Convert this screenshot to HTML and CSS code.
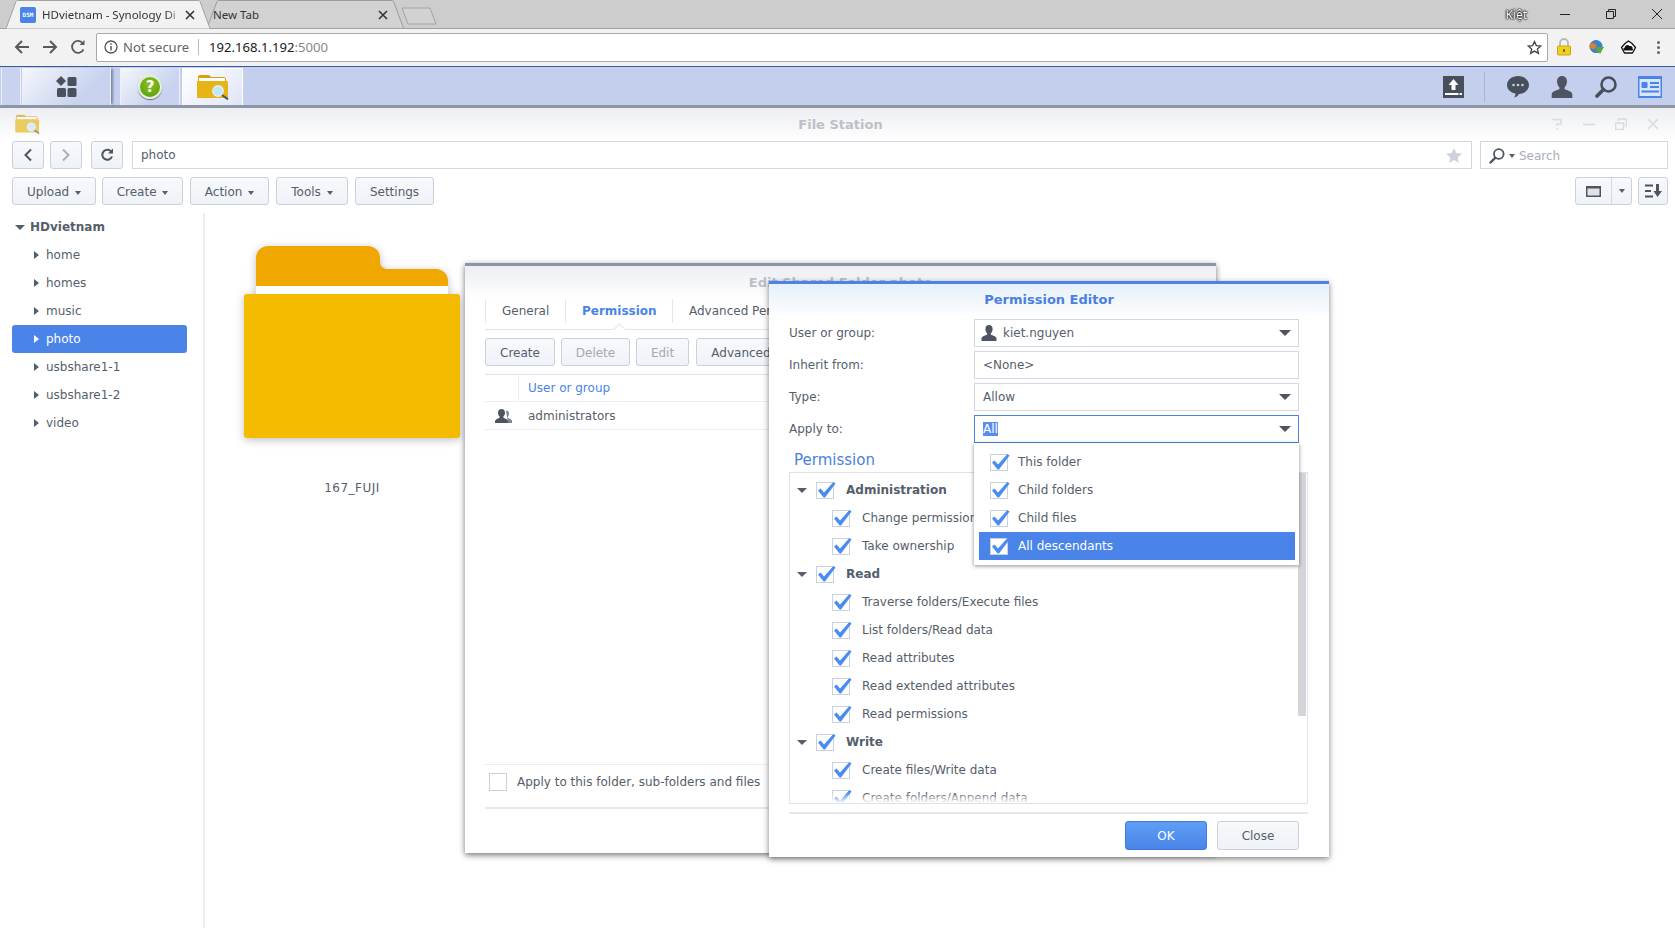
FILE: index.html
```html
<!DOCTYPE html>
<html lang="en">
<head>
  <meta charset="UTF-8" />
  <meta name="viewport" content="width=device-width, initial-scale=1.0" />
  <title>HDvietnam - Synology DiskStation</title>
  <link rel="stylesheet" href="styles.css">
</head>
<body>
  <!-- shared icons -->
  <svg class="defs" width="0" height="0">
    <symbol id="check" viewBox="0 0 20 18">
      <rect x="0.500" y="1.500" width="17" height="16" fill="#fff" stroke="#c9d1de" />
      <path d="M2 9.500 4.600 7.600 8 11.400 17.400 1 19.600 2.600 9 16.400H7.600z" fill="#4a8cf0" />
    </symbol>
    <symbol id="user" viewBox="0 0 16 16">
      <path d="M8 0c2.300 0 3.600 1.700 3.600 3.900 0 1.700-.7 3.300-1.600 4.300-.3.400-.3 1.200.2 1.500 1.500.8 4.800 1.500 5.300 3.500V16H.5v-2.800c.5-2 3.800-2.700 5.300-3.500.5-.3.500-1.100.2-1.500C5.100 7.200 4.400 5.600 4.400 3.900 4.400 1.700 5.700 0 8 0z" fill="#4d5561" />
    </symbol>
    <symbol id="finder" viewBox="0 0 32 26">
      <path d="M1 3c0-1 .7-2 2-2h9l2 2h13c1.200 0 2 .8 2 2v3H1z" fill="#d99f10" />
      <rect x="2" y="4" width="26" height="3" fill="#fff" />
      <path d="M0 7h30c.6 0 1 .4 1 1v15c0 .6-.4 1-1 1H1c-.6 0-1-.4-1-1z" fill="#e6b414" />
      <circle cx="21" cy="17" r="5.200" fill="#bfe6fb" stroke="#e8eef2" stroke-width="1.400" />
      <path d="M25 21 31 25.400" stroke="#4d5561" stroke-width="2" />
    </symbol>
  </svg>

  <!-- browser chrome -->
  <div class="tabstrip">
    <div class="tab tab-active">
      <svg class="tab-shape" width="205" height="29"><path d="M0 28.500 10 1.500C10.300.800 10.800.500 11.500.500H192.500C193.200.500 193.700.800 194 1.500L204 28.500" fill="#f2f2f2" stroke="#a2a2a2" /></svg>
      <span class="favicon">DSM</span>
      <span class="tab-title">HDvietnam - Synology Di</span>
      <svg class="tab-close" width="10" height="10"><path d="M1 1 9 9M9 1 1 9" stroke="#333" stroke-width="1.600" /></svg>
    </div>
    <div class="tab tab-other">
      <svg class="tab-shape" width="197" height="29"><path d="M0 28 10 1.500C10.300.800 10.800.500 11.500.500H185C185.700.500 186.200.800 186.500 1.500L196.500 28" fill="#d2d2d2" stroke="#9c9c9c" /></svg>
      <span class="tab-title">New Tab</span>
      <svg class="tab-close" width="10" height="10"><path d="M1 1 9 9M9 1 1 9" stroke="#333" stroke-width="1.600" /></svg>
    </div>
    <svg class="tab-new" width="36" height="18"><path d="M1 1H29L35 17H7z" fill="#d2d2d2" stroke="#a4a4a4" stroke-linejoin="round" /></svg>
    <span class="chrome-user">Kiệt</span>
    <div class="win-buttons">
      <svg width="12" height="12"><path d="M1 6.500H11" stroke="#222" /></svg>
      <svg width="12" height="12"><path d="M1.500 3.500H8.500V10.500H1.500zM3.500 3.500V1.500H10.500V8.500H8.500" fill="none" stroke="#222" /></svg>
      <svg width="12" height="12"><path d="M1 1 11 11M11 1 1 11" stroke="#222" /></svg>
    </div>
  </div>

  <div class="addressbar">
    <svg class="nav-icon" width="16" height="16" viewBox="0 0 16 16"><path d="M15 8H2M8 2 2 8l6 6" fill="none" stroke="#5a5a5a" stroke-width="2" /></svg>
    <svg class="nav-icon" width="16" height="16" viewBox="0 0 16 16"><path d="M1 8H14M8 2l6 6-6 6" fill="none" stroke="#5a5a5a" stroke-width="2" /></svg>
    <svg class="nav-icon" width="16" height="16" viewBox="0 0 16 16"><path d="M13.500 10.500A6 6 0 1 1 13 4.500" fill="none" stroke="#5a5a5a" stroke-width="1.800" /><path d="M14.500 1v5h-5z" fill="#5a5a5a" /></svg>
    <div class="omnibox">
      <svg width="14" height="14" viewBox="0 0 14 14"><circle cx="7" cy="7" r="6" fill="none" stroke="#555" stroke-width="1.300" /><path d="M7 6v4.500M7 3.200v1.500" stroke="#555" stroke-width="1.500" /></svg>
      <span class="not-secure">Not secure</span>
      <span class="omni-sep"></span>
      <span class="url">192.168.1.192<span class="url-port">:5000</span></span>
      <svg class="omni-star" width="15" height="15" viewBox="0 0 15 15"><path d="M7.500 1.500 9.300 5.600 13.800 6 10.400 9 11.400 13.400 7.500 11.100 3.600 13.400 4.600 9 1.200 6 5.700 5.600z" fill="none" stroke="#444" stroke-width="1.300" /></svg>
    </div>
    <div class="ext-icon">
      <svg width="16" height="18" viewBox="0 0 16 18"><path d="M4 9V5a4 4 0 0 1 8 0v4" fill="none" stroke="#b9b9b9" stroke-width="1.800" /><rect x="1.500" y="8" width="13" height="9" rx="1" fill="#f0d020" stroke="#c8a810" /><rect x="7" y="11" width="2" height="3" fill="#8a7208" /></svg>
    </div>
    <div class="ext-icon">
      <svg width="17" height="16" viewBox="0 0 17 16"><path d="M8 1a6.500 6.500 0 1 0 .1 0z" fill="#3f7fcf" /><path d="M2 5c2-2 5-1 6 1s-1 5-4 4-3-3-2-5z" fill="#d9822b" /><path d="M9 8h7l-4 7-2-3-3 1z" fill="#58a83a" /></svg>
    </div>
    <div class="ext-icon">
      <svg width="17" height="15" viewBox="0 0 17 15"><path d="M8.500 1 12 3.500 15.500 7.500 12.500 13H4.500L1.500 7.500 5 3.500z" fill="#fff" stroke="#111" stroke-width="1.300" stroke-linejoin="round" /><path d="M4.500 10.500c-1.600 0-1.600-2.500 0-2.700C5 5 8 4 9.500 6c2-.5 3.500 1 3 2.500 1 .5.500 2-.5 2z" fill="#111" /></svg>
    </div>
    <div class="ext-menu"><i></i><i></i><i></i></div>
  </div>

  <!-- DSM taskbar -->
  <div class="taskbar">
    <div class="task-btn task-stub"></div>
    <div class="task-btn task-main">
      <svg width="21" height="21" viewBox="0 0 21 21"><path d="M5 0 10 5 5 10 0 5z" fill="#4a515c" /><rect x="11.500" y="1" width="9" height="9" rx="1.500" fill="#4a515c" /><rect x="1" y="12" width="9" height="9" rx="1.500" fill="#4a515c" /><rect x="11.500" y="12" width="9" height="9" rx="1.500" fill="#4a515c" /></svg>
    </div>
    <div class="task-btn task-help">
      <span class="help-icon">?</span>
    </div>
    <div class="task-btn task-open">
      <svg width="32" height="26"><use href="#finder" /></svg>
    </div>
    <div class="task-right">
      <svg class="task-upload" width="21" height="22" viewBox="0 0 21 22"><rect width="21" height="22" fill="#474f5b" /><path d="M10.500 3 15.500 9H12.500V14H8.500V9H5.500z" fill="#fff" /><rect x="2" y="17" width="17" height="2" fill="#fff" /><rect x="15" y="17.500" width="2" height="1" fill="#474f5b" /></svg>
      <span class="task-sep"></span>
      <svg width="22" height="22" viewBox="0 0 22 22"><path d="M11 0c6 0 11 3.900 11 9s-5 9-10 9c-1 1.500-2.500 3-5 3.500 1-1 1.500-2.500 1.400-4C3.500 16.500 0 13.500 0 9 0 3.900 5 0 11 0z" fill="#474f5b" /><circle cx="6.500" cy="9" r="1.300" fill="#c3cfec" /><circle cx="11" cy="9" r="1.300" fill="#c3cfec" /><circle cx="15.500" cy="9" r="1.300" fill="#c3cfec" /></svg>
      <svg width="22" height="22"><use href="#user" /></svg>
      <svg width="22" height="22" viewBox="0 0 22 22"><circle cx="13.500" cy="8.500" r="7" fill="none" stroke="#474f5b" stroke-width="2.600" /><path d="M8.500 13.500 2 20" stroke="#474f5b" stroke-width="3.600" stroke-linecap="round" /></svg>
      <svg class="task-card" width="24" height="22" viewBox="0 0 24 22"><rect width="24" height="22" fill="#4a84e8" /><rect x="1.500" y="3" width="21" height="17" fill="#d9e5fa" /><rect x="3.500" y="6" width="6" height="6" rx="1" fill="#4a84e8" /><path d="M12 7H21M12 11H21M3.500 15.500H21" stroke="#4a84e8" stroke-width="1.800" /></svg>
    </div>
  </div>

  <!-- File Station window -->
  <div class="window">
    <div class="window-head">
      <svg class="window-icon" width="25" height="20"><use href="#finder" /></svg>
      <span class="window-title">File Station</span>
      <div class="window-tools">
        <svg width="12" height="12" viewBox="0 0 12 12"><path d="M1.500 1.500H10V6H6V8M6 10V11.500" fill="none" stroke="#d9dbe0" stroke-width="1.600" /></svg>
        <svg width="12" height="12" viewBox="0 0 12 12"><path d="M0 6.500H12" stroke="#d9dbe0" stroke-width="1.600" /></svg>
        <svg width="12" height="12" viewBox="0 0 12 12"><path d="M.500 5H8.500V11.500H.500zM3.500 3V1H11.500V7.500H9.500" fill="none" stroke="#d9dbe0" stroke-width="1.300" /></svg>
        <svg width="12" height="12" viewBox="0 0 12 12"><path d="M1 1 11 11M11 1 1 11" stroke="#d9dbe0" stroke-width="1.600" /></svg>
      </div>
    </div>

    <div class="nav-row">
      <button class="btn btn-square"><svg width="10" height="14" viewBox="0 0 10 14"><path d="M8 1.500 2.500 7 8 12.500" fill="none" stroke="#4d5561" stroke-width="2" /></svg></button>
      <button class="btn btn-square btn-next"><svg width="10" height="14" viewBox="0 0 10 14"><path d="M2 1.500 7.500 7 2 12.500" fill="none" stroke="#aab0b9" stroke-width="2" /></svg></button>
      <button class="btn btn-square btn-refresh"><svg width="14" height="14" viewBox="0 0 14 14"><path d="M12 8.500A5 5 0 1 1 11.500 4" fill="none" stroke="#4d5561" stroke-width="2" /><path d="M13 0.500V5.500H8z" fill="#4d5561" /></svg></button>
      <div class="path-box">
        <span>photo</span>
        <svg width="16" height="15" viewBox="0 0 16 15"><path d="M8 0 10.300 5.100 16 5.700 11.700 9.400 12.900 15 8 12.100 3.100 15 4.300 9.400 0 5.700 5.700 5.100z" fill="#ced2da" /></svg>
      </div>
      <div class="search-box">
        <svg width="16" height="16" viewBox="0 0 16 16"><circle cx="9.800" cy="6" r="4.800" fill="none" stroke="#4d5561" stroke-width="1.800" /><path d="M6.200 9.800 1.500 14.500" stroke="#4d5561" stroke-width="2.400" stroke-linecap="round" /></svg>
        <i class="caret-down caret-small"></i>
        <span>Search</span>
      </div>
    </div>

    <div class="tool-row">
      <button class="btn btn-upload">Upload <i class="caret-down caret-small"></i></button>
      <button class="btn btn-create">Create <i class="caret-down caret-small"></i></button>
      <button class="btn btn-action">Action <i class="caret-down caret-small"></i></button>
      <button class="btn btn-tools">Tools <i class="caret-down caret-small"></i></button>
      <button class="btn btn-settings">Settings</button>
      <div class="tool-right">
        <div class="btn view-group">
          <span class="view-main"><svg width="15" height="11" viewBox="0 0 15 11"><rect width="15" height="11" fill="#4d5561" /><rect x="1.500" y="2.500" width="12" height="7" fill="#dfe2e7" /></svg></span>
          <span class="view-more"><i class="caret-down caret-small"></i></span>
        </div>
        <button class="btn btn-sort"><svg width="17" height="14" viewBox="0 0 17 14"><path d="M0 1.500H8M0 7H6M0 12.500H8" stroke="#4d5561" stroke-width="2" /><path d="M11 0H14V7H17L12.500 13 8.500 7H11z" fill="#4d5561" /></svg></button>
      </div>
    </div>

    <div class="main">
      <div class="tree">
        <div class="tree-root"><i class="caret-down"></i>HDvietnam</div>
        <div class="tree-item"><i class="caret-right"></i>home</div>
        <div class="tree-item"><i class="caret-right"></i>homes</div>
        <div class="tree-item"><i class="caret-right"></i>music</div>
        <div class="tree-item tree-selected"><i class="caret-right"></i>photo</div>
        <div class="tree-item"><i class="caret-right"></i>usbshare1-1</div>
        <div class="tree-item"><i class="caret-right"></i>usbshare1-2</div>
        <div class="tree-item"><i class="caret-right"></i>video</div>
      </div>
      <div class="files">
        <div class="file-item">
          <svg class="big-folder" width="216" height="192" viewBox="0 0 216 192">
            <path d="M12 48V12A12 12 0 0 1 24 0H124A12 12 0 0 1 136 12V16A7 7 0 0 0 143 23H192A12 12 0 0 1 204 35V48z" fill="#f0a800" />
            <rect x="12" y="40" width="192" height="9" fill="#fff" />
            <rect y="48" width="216" height="144" rx="3" fill="#f4bb00" />
          </svg>
          <span class="file-name">167_FUJI</span>
        </div>
      </div>
    </div>
  </div>

  <!-- Edit shared folder dialog -->
  <div class="dialog edit-dialog">
    <div class="dialog-head">Edit Shared Folder photo</div>
    <div class="tabs">
      <span class="tabs-item tabs-general">General</span>
      <span class="tabs-item tabs-current">Permission</span>
      <span class="tabs-item">Advanced Permissions</span>
    </div>
    <div class="grid-tools">
      <button class="btn btn-new">Create</button>
      <button class="btn btn-off btn-delete">Delete</button>
      <button class="btn btn-off btn-edit">Edit</button>
      <button class="btn btn-adv">Advanced options</button>
    </div>
    <div class="grid-head"><span class="grid-icon-col"></span><span class="grid-col-title">User or group</span></div>
    <div class="grid-row">
      <svg class="grid-icon" width="17" height="14" viewBox="0 0 17 14"><path d="M11 1.500c2 0 3 1.400 3 3.200 0 1.300-.6 2.500-1.300 3.200-.2.400 0 .9.400 1.100 1.300.7 3.400 1 3.900 2.700V14H13z" fill="#7d858f" /><path d="M6.500 0C8.700 0 10 1.600 10 3.700c0 1.500-.7 3-1.500 3.900-.3.400-.2 1.100.3 1.400 1.400.8 3.800 1.200 4.200 3V14H0v-2c.4-1.800 2.800-2.200 4.200-3 .5-.3.600-1 .3-1.400C3.700 6.700 3 5.200 3 3.700 3 1.600 4.300 0 6.500 0z" fill="#4d5561" /></svg>
      <span>administrators</span>
    </div>
    <div class="edit-bottom">
      <label class="apply-row"><span class="empty-check"></span>Apply to this folder, sub-folders and files</label>
    </div>
  </div>

  <!-- Permission editor dialog -->
  <div class="dialog perm-dialog">
    <div class="perm-head">Permission Editor</div>
    <div class="form-row">
      <span>User or group:</span>
      <div class="field field-with-icon">
        <svg width="16" height="16"><use href="#user" /></svg>
        <span class="field-user">kiet.nguyen</span>
        <i class="caret-down caret-field"></i>
      </div>
    </div>
    <div class="form-row">
      <span>Inherit from:</span>
      <div class="field"><span>&lt;None&gt;</span></div>
    </div>
    <div class="form-row">
      <span>Type:</span>
      <div class="field"><span>Allow</span><i class="caret-down caret-field"></i></div>
    </div>
    <div class="form-row">
      <span>Apply to:</span>
      <div class="field field-focus"><span class="text-selected">All</span><i class="caret-down caret-field"></i></div>
    </div>
    <div class="perm-title">Permission</div>

    <div class="perm-panel">
      <div class="perm-row perm-group"><i class="caret-down"></i><svg class="cb" width="20" height="18"><use href="#check" /></svg>Administration</div>
      <div class="perm-row"><svg class="cb" width="20" height="18"><use href="#check" /></svg>Change permissions</div>
      <div class="perm-row"><svg class="cb" width="20" height="18"><use href="#check" /></svg>Take ownership</div>
      <div class="perm-row perm-group"><i class="caret-down"></i><svg class="cb" width="20" height="18"><use href="#check" /></svg>Read</div>
      <div class="perm-row"><svg class="cb" width="20" height="18"><use href="#check" /></svg>Traverse folders/Execute files</div>
      <div class="perm-row"><svg class="cb" width="20" height="18"><use href="#check" /></svg>List folders/Read data</div>
      <div class="perm-row"><svg class="cb" width="20" height="18"><use href="#check" /></svg>Read attributes</div>
      <div class="perm-row"><svg class="cb" width="20" height="18"><use href="#check" /></svg>Read extended attributes</div>
      <div class="perm-row"><svg class="cb" width="20" height="18"><use href="#check" /></svg>Read permissions</div>
      <div class="perm-row perm-group"><i class="caret-down"></i><svg class="cb" width="20" height="18"><use href="#check" /></svg>Write</div>
      <div class="perm-row"><svg class="cb" width="20" height="18"><use href="#check" /></svg>Create files/Write data</div>
      <div class="perm-row"><svg class="cb" width="20" height="18"><use href="#check" /></svg>Create folders/Append data</div>
      <div class="perm-scroll"></div>
      <div class="perm-fade"></div>
    </div>

    <div class="perm-foot">
      <button class="btn btn-ok">OK</button>
      <button class="btn btn-close">Close</button>
    </div>

    <div class="apply-menu">
      <div class="menu-item"><svg class="cb" width="20" height="18"><use href="#check" /></svg>This folder</div>
      <div class="menu-item"><svg class="cb" width="20" height="18"><use href="#check" /></svg>Child folders</div>
      <div class="menu-item"><svg class="cb" width="20" height="18"><use href="#check" /></svg>Child files</div>
      <div class="menu-item menu-selected"><svg class="cb" width="20" height="18"><use href="#check" /></svg>All descendants</div>
    </div>
  </div>
</body>
</html>
```
FILE: styles.css
```css
* {
  box-sizing: border-box;
}
html, body {
  height: 100%;
}
body {
  position: relative;
  margin: 0;
  overflow: hidden;
  background-color: #fff;
  color: #555e6b;
  font-family: "DejaVu Sans", sans-serif;
  font-size: 12px;
}
.defs {
  position: absolute;
}
i {
  display: inline-block;
}

/* carets */
.caret-down {
  width: 0;
  height: 0;
  border-left: 5px solid transparent;
  border-right: 5px solid transparent;
  border-top: 5px solid #555e6b;
}
.caret-small {
  border-left-width: 3.500px;
  border-right-width: 3.500px;
  border-top-width: 4px;
  margin-left: 2px;
  vertical-align: 1px;
}
.caret-right {
  width: 0;
  height: 0;
  border-top: 4.500px solid transparent;
  border-bottom: 4.500px solid transparent;
  border-left: 5px solid #555e6b;
}
.caret-field {
  margin-left: auto;
  margin-right: -1px;
  border-left-width: 6px;
  border-right-width: 6px;
  border-top-width: 6px;
  border-top-color: #4d5561;
}

/* browser tabs */
.tabstrip {
  display: flex;
  height: 29px;
  padding-left: 6px;
  background-color: #cdcdcd;
  border-bottom: 1px solid #a2a2a2;
  font-family: "Noto Sans", sans-serif;
  font-size: 11.500px;
  color: #333;
}
.tab {
  position: relative;
  display: flex;
  align-items: center;
  height: 29px;
}
.tab > * {
  position: relative;
}
.tab-shape {
  position: absolute !important;
  top: 0;
  left: 0;
}
.tab-active {
  z-index: 2;
  width: 205px;
  padding-left: 14px;
}
.tab-other {
  width: 197px;
  margin-left: -4px;
  padding-left: 6px;
}
.favicon {
  width: 16px;
  height: 16px;
  margin-right: 6px;
  border-radius: 2px;
  background-color: #4a84e8;
  color: #fff;
  font-family: "DejaVu Sans Mono", monospace;
  font-size: 6px;
  font-weight: bold;
  line-height: 16px;
  text-align: center;
}
.tab-title {
  width: 141px;
  white-space: nowrap;
}
.tab-active .tab-title {
  -webkit-mask-image: linear-gradient(90deg, #000 88%, transparent 102%);
  mask-image: linear-gradient(90deg, #000 88%, transparent 102%);
}
.tab-other .tab-title {
  width: 163px;
}
.tab-close {
  margin-left: 2px;
}
.tab-new {
  margin: 7px 0 0 -3px;
}
.chrome-user {
  align-self: center;
  margin-left: auto;
  color: #fff;
  font-size: 12px;
  text-shadow: 0 0 1px #000, 0 0 2px #000, 0 0 2px #000;
}
.win-buttons {
  display: flex;
  gap: 34px;
  align-items: center;
  padding: 0 12px 0 32px;
}

/* address bar */
.addressbar {
  display: flex;
  align-items: center;
  height: 37px;
  padding: 0 3px 1px 8px;
  background-color: #f2f2f2;
  font-family: "Noto Sans", sans-serif;
}
.nav-icon {
  width: 28px;
}
.omnibox {
  display: flex;
  align-items: center;
  flex: 1;
  height: 29px;
  margin-left: 4px;
  padding: 0 5px 0 7px;
  background-color: #fff;
  border: 1px solid #aaa;
  border-radius: 2px;
}
.not-secure {
  margin-left: 5px;
  color: #5f6368;
  font-size: 13px;
}
.omni-sep {
  width: 1px;
  height: 16px;
  margin: 0 10px 0 9px;
  background-color: #bbb;
}
.url {
  color: #222;
  font-size: 13.100px;
}
.url-port {
  color: #888;
}
.omni-star {
  margin-left: auto;
}
.ext-icon {
  display: flex;
  justify-content: center;
  width: 32px;
}
.ext-menu {
  display: flex;
  flex-direction: column;
  align-items: center;
  gap: 2px;
  width: 28px;
}
.ext-menu i {
  width: 3px;
  height: 3px;
  background-color: #666;
  border-radius: 50%;
}

/* DSM taskbar */
.taskbar {
  display: flex;
  align-items: stretch;
  height: 42px;
  padding: 1px 13px 0 1px;
  background-color: #c3cfec;
  border-top: 1px solid #3c5a9c;
  border-bottom: 3px solid #8e96a3;
}
.task-btn {
  display: flex;
  align-items: center;
  justify-content: center;
  background: linear-gradient(135deg, #f6f7fc, #c9d3ef 70%);
  border-left: 1px solid #eef1fa;
  border-right: 1px solid #eef1fa;
}
.task-stub {
  width: 20px;
  background: #c9d3ef;
}
.task-main {
  width: 89px;
  margin-left: 1px;
  box-shadow: 3px 0 2px -1px #7b86a0;
}
.task-help {
  width: 60px;
  margin-left: 9px;
}
.task-open {
  width: 61px;
  margin-left: 2px;
  background: linear-gradient(135deg, #fff, #dfe5f6);
  border: 1px solid #fff;
  border-bottom-width: 0;
}
.help-icon {
  width: 24px;
  height: 24px;
  background: radial-gradient(circle at 50% 35%, #8fc31f, #4f9a0c);
  border: 2px solid #e4efd8;
  border-radius: 50%;
  box-shadow: 0 1px 1px #667;
  color: #fff;
  font-size: 15px;
  font-weight: bold;
  line-height: 20px;
  text-align: center;
}
.task-right {
  display: flex;
  align-items: center;
  gap: 22px;
  margin-left: auto;
}
.task-upload {
  margin-right: -2px;
}
.task-card {
  margin-left: -1px;
}
.task-sep {
  width: 1px;
  height: 30px;
  background-color: #a9b5d3;
}

/* File Station window */
.window-head {
  position: relative;
  height: 33px;
  padding: 6px 0 0 15px;
  background: linear-gradient(#eceef2, #fff);
}
.window-icon {
  opacity: 0.65;
}
.window-title {
  position: absolute;
  top: 9px;
  left: 3px;
  width: 100%;
  color: #bcc0c7;
  font-size: 13px;
  font-weight: bold;
  text-align: center;
}
.window-tools {
  position: absolute;
  top: 10px;
  right: 16px;
  display: flex;
  gap: 20px;
}
.btn {
  height: 100%;
  padding: 1px 0 0;
  background: linear-gradient(#f7f9fc, #eff2f7);
  border: 1px solid #c9d1de;
  border-radius: 3px;
  color: #555e6b;
  font-family: inherit;
  font-size: 12px;
}
.nav-row {
  display: flex;
  height: 28px;
  padding: 0 7px 0 12px;
}
.btn-square {
  display: flex;
  align-items: center;
  justify-content: center;
  width: 32px;
  padding: 0;
}
.btn-next {
  margin-left: 6px;
}
.btn-refresh {
  margin-left: 9px;
}
.path-box {
  display: flex;
  align-items: center;
  justify-content: space-between;
  flex: 1;
  margin-left: 9px;
  padding: 0 9px 0 8px;
  border: 1px solid #d3d8e2;
}
.search-box {
  display: flex;
  align-items: center;
  width: 188px;
  margin-left: 8px;
  padding: 1px 0 0 8px;
  border: 1px solid #d3d8e2;
  color: #a9aeb8;
}
.search-box i {
  margin-left: 4px;
}
.search-box span {
  margin-left: 4px;
}
.tool-row {
  display: flex;
  gap: 6px;
  height: 28px;
  margin-top: 8px;
  padding: 0 7px 0 12px;
}
.btn-upload {
  width: 84px;
}
.btn-create {
  width: 81px;
}
.btn-action {
  width: 79px;
  margin-left: 1px;
}
.btn-tools {
  width: 72px;
  margin-left: 1px;
}
.btn-settings {
  width: 79px;
  margin-left: 1px;
}
.tool-right {
  display: flex;
  gap: 6px;
  margin-left: auto;
}
.view-group {
  display: flex;
  width: 57px;
  padding: 0;
}
.view-main {
  display: flex;
  align-items: center;
  justify-content: center;
  width: 36px;
  border-right: 1px solid #d3d8e2;
}
.view-more {
  display: flex;
  align-items: center;
  justify-content: center;
  flex: 1;
}
.view-more i {
  margin: 0;
}
.btn-sort {
  display: flex;
  align-items: center;
  justify-content: center;
  width: 30px;
  padding: 0;
}
.main {
  display: flex;
  height: 715px;
  margin-top: 8px;
}
.tree {
  width: 205px;
  padding-left: 12px;
  border-right: 2px solid #eceef1;
}
.tree-root {
  display: flex;
  align-items: center;
  height: 28px;
  padding-left: 3px;
  font-weight: bold;
}
.tree-root i {
  margin-right: 5px;
}
.tree-item {
  display: flex;
  align-items: center;
  width: 175px;
  height: 28px;
  padding-left: 22px;
  border-radius: 3px;
}
.tree-item i {
  margin-right: 7px;
}
.tree-selected {
  background-color: #4a84e8;
  color: #fff;
}
.tree-selected i {
  border-left-color: #fff;
}
.files {
  flex: 1;
  padding: 33px 0 0 39px;
}
.file-item {
  display: flex;
  flex-direction: column;
  align-items: center;
  width: 216px;
}
.big-folder {
  overflow: visible;
  filter: drop-shadow(0 2px 4px rgba(0, 0, 0, 0.25));
}
.file-name {
  margin-top: 43px;
  letter-spacing: 0.500px;
}

/* dialogs */
.dialog {
  position: absolute;
  display: flex;
  flex-direction: column;
  background-color: #fff;
}
.edit-dialog {
  top: 263px;
  left: 465px;
  width: 751px;
  height: 590px;
  padding: 0 20px;
  border-top: 3px solid #8e96a3;
  box-shadow: 0 2px 6px rgba(0, 0, 0, 0.55);
}
.dialog-head {
  height: 33px;
  margin: 0 -20px;
  padding-top: 9px;
  background: linear-gradient(#eceef2, #fff);
  color: #bcc0c7;
  font-size: 13px;
  font-weight: bold;
  text-align: center;
}
.tabs {
  display: flex;
  height: 30px;
  padding-bottom: 6px;
  border-bottom: 0;
  box-shadow: 0 1px 0 #e0e3e8;
  white-space: nowrap;
}
.tabs-item {
  padding: 0 16px;
  border-left: 1px solid #e3e6ea;
  line-height: 25px;
}
.tabs-general {
  width: 80px;
}
.tabs-current {
  position: relative;
  width: 107px;
  color: #4a84e8;
  font-weight: bold;
}
.tabs-current::after {
  content: "";
  position: absolute;
  top: 26px;
  left: 49px;
  width: 8px;
  height: 8px;
  background-color: #fff;
  border-top: 1px solid #e0e3e8;
  border-left: 1px solid #e0e3e8;
  transform: rotate(45deg);
}
.grid-tools {
  display: flex;
  gap: 6px;
  height: 28px;
  margin-top: 9px;
}
.btn-new {
  width: 70px;
}
.btn-off {
  color: #a4a9b2;
}
.btn-delete {
  width: 69px;
}
.btn-edit {
  width: 53px;
}
.btn-adv {
  width: 138px;
  margin-left: 1px;
}
.grid-head {
  display: flex;
  align-items: stretch;
  height: 28px;
  margin-top: 8px;
  border-top: 1px solid #dfe3e9;
  border-bottom: 1px solid #eceef1;
}
.grid-icon-col {
  width: 34px;
  border-right: 1px solid #eceef1;
}
.grid-col-title {
  margin-left: 9px;
  color: #4a84e8;
  line-height: 26px;
}
.grid-row {
  display: flex;
  align-items: center;
  height: 28px;
  border-bottom: 1px solid #eceef1;
}
.grid-row span {
  padding-top: 1px;
}
.grid-icon {
  margin: 0 16px 0 10px;
}
.edit-bottom {
  margin-top: auto;
  margin-bottom: 44px;
  border-top: 1px solid #eceef1;
  border-bottom: 2px solid #e6e8ec;
}
.apply-row {
  display: flex;
  align-items: center;
  height: 42px;
  padding: 1px 0 9px 4px;
}
.empty-check {
  width: 18px;
  height: 18px;
  margin-right: 10px;
  border: 1px solid #c9d1de;
}

/* permission editor */
.perm-dialog {
  top: 281px;
  left: 769px;
  width: 560px;
  height: 576px;
  padding: 0 21px 0 20px;
  border-top: 3px solid #4a84e8;
  box-shadow: 0 2px 6px rgba(0, 0, 0, 0.5);
}
.perm-head {
  height: 35px;
  margin: 0 -21px 0 -20px;
  padding-top: 8px;
  background: linear-gradient(#e6f0fb, #fff);
  color: #4a7fe0;
  font-size: 13px;
  font-weight: bold;
  text-align: center;
}
.form-row {
  display: flex;
  align-items: center;
  height: 28px;
  margin-bottom: 4px;
}
.form-row > span {
  width: 185px;
}
.field {
  display: flex;
  align-items: center;
  width: 325px;
  height: 28px;
  padding: 0 8px;
  border: 1px solid #d3d8e2;
}
.field-with-icon {
  padding-left: 6px;
}
.field-user {
  margin-left: 6px;
}
.field-focus {
  border-color: #4a84e8;
}
.text-selected {
  background-color: #5a8cf0;
  color: #fff;
}
.perm-title {
  height: 25px;
  padding: 4px 0 0 5px;
  color: #4a7fe0;
  font-size: 15px;
}
.perm-panel {
  position: relative;
  height: 332px;
  padding-top: 3px;
  overflow: hidden;
  border: 1px solid #dfe3e9;
}
.perm-row {
  display: flex;
  align-items: center;
  height: 28px;
  padding-left: 42px;
}
.perm-group {
  padding-left: 7px;
  font-weight: bold;
}
.perm-group i {
  margin-right: 9px;
}
.cb {
  flex: none;
  margin-right: 10px;
}
.perm-scroll {
  position: absolute;
  top: 0;
  right: 1px;
  width: 8px;
  height: 243px;
  background-color: #d3d5da;
}
.perm-fade {
  position: absolute;
  bottom: 0;
  left: 0;
  width: 100%;
  height: 10px;
  background: linear-gradient(rgba(255, 255, 255, 0), #fff);
}
.perm-foot {
  display: flex;
  justify-content: flex-end;
  gap: 10px;
  height: 39px;
  margin-top: 8px;
  padding: 7px 9px 1px 0;
  border-top: 2px solid #e6e8ec;
}
.btn-ok {
  width: 82px;
  background: linear-gradient(#5e9ff5, #4a84e8);
  border-color: #4079df;
  color: #fff;
}
.btn-close {
  width: 82px;
}
.apply-menu {
  position: absolute;
  top: 159px;
  left: 205px;
  width: 325px;
  padding: 5px 4px 5px 5px;
  background-color: #fff;
  box-shadow: 0 1px 4px rgba(0, 0, 0, 0.45);
}
.menu-item {
  display: flex;
  align-items: center;
  height: 28px;
  padding-left: 11px;
}
.menu-item .cb {
  margin-right: 8px;
}
.menu-selected {
  background-color: #4a84e8;
  color: #fff;
}
```
